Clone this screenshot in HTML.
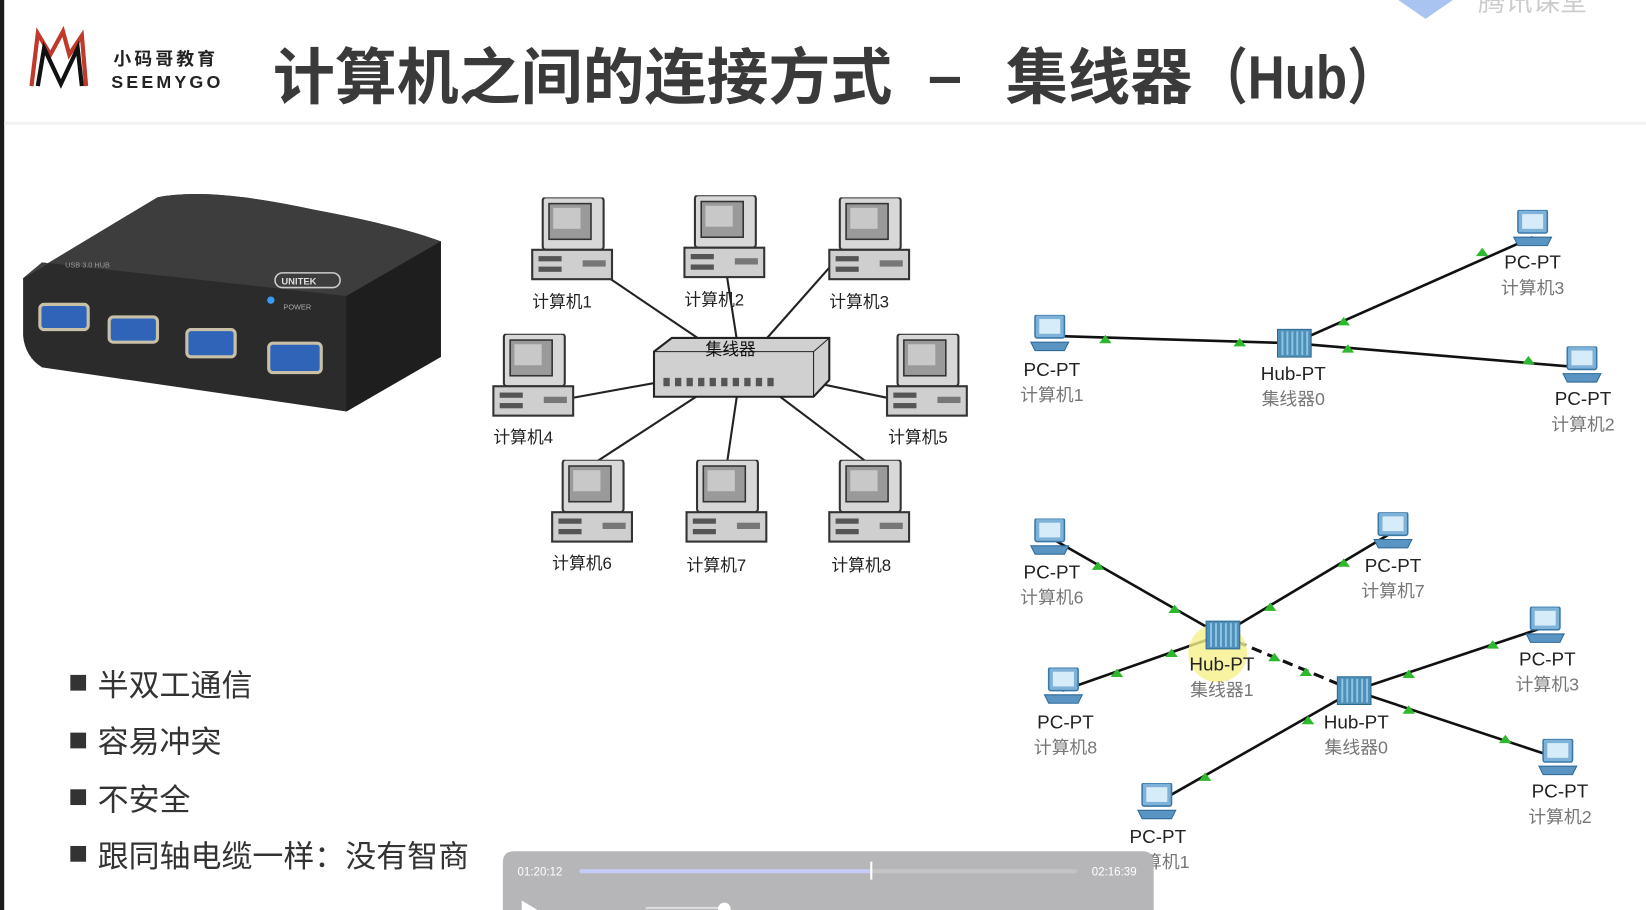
<!DOCTYPE html>
<html><head><meta charset="utf-8"><style>
html,body{margin:0;padding:0;background:#fff;overflow:hidden}
svg{display:block}
text{font-family:"Liberation Sans","Noto Sans CJK SC",sans-serif}
</style></head><body>
<svg width="1646" height="910" viewBox="0 0 1568 867" preserveAspectRatio="none" xmlns="http://www.w3.org/2000/svg">
<defs>
<symbol id="pc" viewBox="0 0 80 80">
<rect x="12" y="0" width="58" height="50" rx="3" fill="#d8d8d8" stroke="#333" stroke-width="2"/>
<rect x="18" y="6" width="40" height="34" fill="#9a9a9a" stroke="#333" stroke-width="1.5"/>
<rect x="22" y="10" width="26" height="20" fill="#c8c8c8"/>
<rect x="2" y="50" width="76" height="28" fill="#cfcfcf" stroke="#333" stroke-width="2"/>
<rect x="8" y="56" width="22" height="5" fill="#555"/>
<rect x="8" y="66" width="22" height="5" fill="#555"/>
<rect x="50" y="60" width="22" height="6" fill="#777"/>
</symbol>
<symbol id="bpc" viewBox="0 0 40 36">
<rect x="6" y="0" width="28" height="22" rx="2" fill="#7fb2d8" stroke="#3a78a8" stroke-width="1.5"/>
<rect x="10" y="4" width="20" height="14" fill="#d6ecf8"/>
<path d="M2 26 L38 26 L34 34 L6 34 Z" fill="#5a94c2" stroke="#2f6a98"/>
</symbol>
<symbol id="bhub" viewBox="0 0 36 30">
<rect x="1" y="1" width="34" height="28" fill="#4f8fb8" stroke="#2c6a92"/>
<path d="M6 3v24M11 3v24M16 3v24M21 3v24M26 3v24M31 3v24" stroke="#8cc4e4" stroke-width="2"/>
</symbol>
</defs>
<rect width="1568" height="867" fill="#fff"/>
<rect x="0" y="0" width="4" height="867" fill="#1a1a1a"/>
<rect x="4" y="116" width="1564" height="3" fill="#f1f1f1"/>
<!-- logo -->
<path d="M30 82 L36 32 L48 52 L60 30 L66 52 L78 34 L82 82" fill="none" stroke="#c0392b" stroke-width="4"/>
<path d="M36 82 L42 46 L58 80 L74 46 L78 82" fill="none" stroke="#111" stroke-width="4"/>
<text x="108" y="62" font-size="17" font-weight="bold" fill="#222" letter-spacing="3">小码哥教育</text>
<text x="106" y="84" font-size="17" font-weight="bold" fill="#222" letter-spacing="3">SEEMYGO</text>
<g font-size="58" font-weight="bold" fill="#3a3a3a">
<text x="260" y="94" textLength="590" lengthAdjust="spacingAndGlyphs">计算机之间的连接方式</text>
<text x="884" y="92">–</text>
<text x="958" y="94" textLength="178" lengthAdjust="spacingAndGlyphs">集线器</text>
<text x="1140" y="94" textLength="192" lengthAdjust="spacingAndGlyphs">（Hub）</text>
</g>
<!-- top right watermark -->
<path d="M1332 0 L1384 0 L1358 18 Z" fill="#a9c4f0"/>
<text x="1408" y="10" font-size="26" fill="#ccc">腾讯课堂</text>
<!-- USB hub photo -->
<path d="M22 265 L150 188 Q200 178 300 200 Q380 215 420 230 L420 340 L330 392 L40 350 Q24 340 22 320 Z" fill="#2b2b2b"/>
<path d="M22 265 L150 188 Q200 178 300 200 Q380 215 420 230 L330 282 L40 250 Z" fill="#3d3d3d"/>
<path d="M330 282 L420 230 L420 340 L330 392 Z" fill="#1e1e1e"/>
<rect x="262" y="260" width="62" height="14" rx="7" fill="none" stroke="#ccc" stroke-width="1.5"/>
<text x="268" y="271" font-size="9" fill="#ddd" font-weight="bold">UNITEK</text>
<circle cx="258" cy="286" r="3.5" fill="#3a9cf0"/>
<text x="270" y="295" font-size="7" fill="#aaa">POWER</text>
<text x="62" y="255" font-size="7" fill="#999">USB 3.0 HUB</text>
<g fill="#2f64b8" stroke="#c9c0a8" stroke-width="3">
<rect x="38" y="290" width="46" height="24" rx="4"/>
<rect x="104" y="302" width="46" height="24" rx="4"/>
<rect x="178" y="314" width="46" height="26" rx="4"/>
<rect x="256" y="327" width="50" height="28" rx="4"/>
</g>
<!-- middle star -->
<g stroke="#222" stroke-width="2">
<line x1="706" y1="350" x2="570" y2="258"/><line x1="706" y1="350" x2="692" y2="260"/><line x1="706" y1="350" x2="790" y2="255"/>
<line x1="706" y1="350" x2="540" y2="380"/><line x1="706" y1="350" x2="850" y2="380"/>
<line x1="706" y1="350" x2="565" y2="442"/><line x1="706" y1="350" x2="692" y2="445"/><line x1="706" y1="350" x2="828" y2="442"/>
</g>
<path d="M623 335 L640 322 L790 322 L790 362 L775 378 L623 378 Z" fill="#d0d0d0" stroke="#222" stroke-width="2"/>
<line x1="623" y1="335" x2="775" y2="335" stroke="#222"/><line x1="775" y1="335" x2="775" y2="378" stroke="#222"/><line x1="775" y1="335" x2="790" y2="322" stroke="#222"/>
<text x="672" y="338" font-size="16" fill="#111">集线器</text>
<g fill="#555"><rect x="632" y="360" width="6" height="8"/><rect x="643" y="360" width="6" height="8"/><rect x="654" y="360" width="6" height="8"/><rect x="665" y="360" width="6" height="8"/><rect x="676" y="360" width="6" height="8"/><rect x="687" y="360" width="6" height="8"/><rect x="698" y="360" width="6" height="8"/><rect x="709" y="360" width="6" height="8"/><rect x="720" y="360" width="6" height="8"/><rect x="731" y="360" width="6" height="8"/></g>
<use href="#pc" x="505" y="188" width="80" height="80"/>
<use href="#pc" x="650" y="186" width="80" height="80"/>
<use href="#pc" x="788" y="188" width="80" height="80"/>
<use href="#pc" x="468" y="318" width="80" height="80"/>
<use href="#pc" x="843" y="318" width="80" height="80"/>
<use href="#pc" x="524" y="438" width="80" height="80"/>
<use href="#pc" x="652" y="438" width="80" height="80"/>
<use href="#pc" x="788" y="438" width="80" height="80"/>
<g font-size="16" fill="#222">
<text x="507" y="293">计算机1</text><text x="652" y="291">计算机2</text><text x="790" y="293">计算机3</text>
<text x="470" y="422">计算机4</text><text x="846" y="422">计算机5</text>
<text x="526" y="542">计算机6</text><text x="654" y="544">计算机7</text><text x="792" y="544">计算机8</text>
</g>
<!-- right top -->
<g stroke="#111" stroke-width="2.5">
<line x1="1000" y1="320" x2="1232" y2="327"/><line x1="1232" y1="327" x2="1460" y2="226"/><line x1="1232" y1="327" x2="1505" y2="350"/>
</g>
<g fill="#2eb82e"><path d="M1047 327l6-8 6 8z"/><path d="M1175 330l6-8 6 8z"/><path d="M1274 310l6-8 6 8z"/><path d="M1406 244l6-8 6 8z"/><path d="M1278 336l6-8 6 8z"/><path d="M1450 347l6-8 6 8z"/></g>
<use href="#bpc" x="980" y="300" width="40" height="36"/>
<use href="#bhub" x="1216" y="312" width="34" height="30"/>
<use href="#bpc" x="1440" y="200" width="40" height="36"/>
<use href="#bpc" x="1487" y="330" width="40" height="36"/>
<g font-size="18" fill="#222" text-anchor="middle">
<text x="1002" y="358">PC-PT</text><text x="1232" y="362">Hub-PT</text><text x="1460" y="256">PC-PT</text><text x="1508" y="386">PC-PT</text>
</g>
<g font-size="17" fill="#777" text-anchor="middle">
<text x="1002" y="382">计算机1</text><text x="1232" y="386">集线器0</text><text x="1460" y="280">计算机3</text><text x="1508" y="410">计算机2</text>
</g>
<!-- right bottom -->
<g stroke="#111" stroke-width="2.5">
<line x1="1000" y1="512" x2="1163" y2="605"/><line x1="1163" y1="605" x2="1325" y2="508"/><line x1="1163" y1="605" x2="1012" y2="658"/>
<line x1="1290" y1="658" x2="1470" y2="598"/><line x1="1290" y1="658" x2="1483" y2="722"/><line x1="1290" y1="658" x2="1102" y2="765"/>
</g>
<line x1="1163" y1="605" x2="1290" y2="658" stroke="#111" stroke-width="3" stroke-dasharray="10 6"/>
<g fill="#2eb82e"><path d="M1040 543l6-8 6 8z"/><path d="M1113 584l6-8 6 8z"/><path d="M1204 582l6-8 6 8z"/><path d="M1274 540l6-8 6 8z"/><path d="M1058 645l6-8 6 8z"/><path d="M1110 626l6-8 6 8z"/><path d="M1208 630l6-8 6 8z"/><path d="M1238 644l6-8 6 8z"/><path d="M1336 646l6-8 6 8z"/><path d="M1416 618l6-8 6 8z"/><path d="M1336 680l6-8 6 8z"/><path d="M1428 708l6-8 6 8z"/><path d="M1240 690l6-8 6 8z"/><path d="M1142 744l6-8 6 8z"/></g>
<circle cx="1160" cy="622" r="28" fill="#f6f08a" opacity="0.8"/>
<use href="#bpc" x="980" y="494" width="40" height="36"/>
<use href="#bhub" x="1148" y="590" width="34" height="30"/>
<use href="#bpc" x="1307" y="488" width="40" height="36"/>
<use href="#bpc" x="993" y="636" width="40" height="36"/>
<use href="#bhub" x="1273" y="643" width="34" height="30"/>
<use href="#bpc" x="1452" y="578" width="40" height="36"/>
<use href="#bpc" x="1464" y="704" width="40" height="36"/>
<use href="#bpc" x="1082" y="746" width="40" height="36"/>
<g font-size="18" fill="#222" text-anchor="middle">
<text x="1002" y="551">PC-PT</text><text x="1327" y="545">PC-PT</text><text x="1164" y="639">Hub-PT</text><text x="1015" y="694">PC-PT</text>
<text x="1292" y="694">Hub-PT</text><text x="1474" y="634">PC-PT</text><text x="1486" y="760">PC-PT</text><text x="1103" y="803">PC-PT</text>
</g>
<g font-size="17" fill="#777" text-anchor="middle">
<text x="1002" y="575">计算机6</text><text x="1327" y="569">计算机7</text><text x="1164" y="663">集线器1</text><text x="1015" y="718">计算机8</text>
<text x="1292" y="718">集线器0</text><text x="1474" y="658">计算机3</text><text x="1486" y="784">计算机2</text><text x="1103" y="827">计算机1</text>
</g>
<!-- bullets -->
<g font-size="29.5" fill="#333">
<rect x="67" y="643" width="15" height="15" fill="#333"/><text x="93" y="663">半双工通信</text>
<rect x="67" y="698" width="15" height="15" fill="#333"/><text x="93" y="717">容易冲突</text>
<rect x="67" y="752" width="15" height="15" fill="#333"/><text x="93" y="772">不安全</text>
<rect x="67" y="806" width="15" height="15" fill="#333"/><text x="93" y="826">跟同轴电缆一样：没有智商</text>
</g>
<!-- player -->
<path d="M479 867 L479 822 Q479 811 490 811 L1088 811 Q1099 811 1099 822 L1099 867 Z" fill="#b6b6b8"/>
<text x="493" y="834" font-size="11" fill="#fff">01:20:12</text>
<text x="1040" y="834" font-size="11" fill="#fff">02:16:39</text>
<rect x="552" y="828" width="474" height="4" rx="2" fill="#c4c4c6"/>
<rect x="552" y="828" width="278" height="4" rx="2" fill="#c5cbf6"/>
<rect x="829" y="821" width="2" height="17" fill="#fff"/>
<path d="M497 858 L512 867 L497 867Z" fill="#fff"/>
<rect x="615" y="864" width="70" height="2" fill="#ddd"/><circle cx="690" cy="866" r="6" fill="#fff"/>
</svg>
</body></html>
